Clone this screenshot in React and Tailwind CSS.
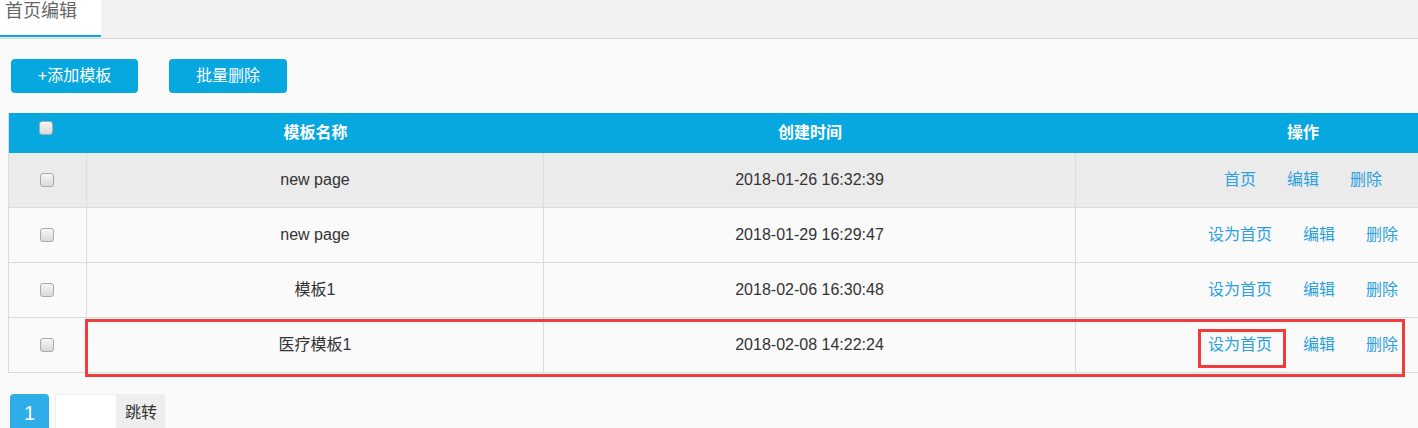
import React from "react";

const rows = [
  { name: "new page", time: "2018-01-26 16:32:39", home: true, hover: true },
  { name: "new page", time: "2018-01-29 16:29:47" },
  { name: "模板1", time: "2018-02-06 16:30:48" },
  { name: "医疗模板1", time: "2018-02-08 14:22:24" },
];

function Box() {
  return (
    <span className="block w-[14px] h-[14px] rounded-[3px] border border-[#a9a9a9] bg-gradient-to-b from-[#f6f6f6] to-[#d9d9d9]" />
  );
}

export default function App() {
  return (
    <div
      className="relative w-[1418px] h-[428px] overflow-hidden bg-[#fafafa] text-[#333]"
      style={{ fontFamily: '"Liberation Sans", "Noto Sans CJK SC", sans-serif' }}
    >
      {/* tab bar */}
      <div className="h-[39px] bg-[#f2f2f2] border-b border-[#d8d8d8] flex">
        <div className="w-[101px] h-[37px] bg-white border-b-2 border-[#07a7e0] pl-[5px] text-[18px] leading-[22px] text-[#666]">
          首页编辑
        </div>
      </div>

      {/* buttons */}
      <div className="flex gap-[31px] pl-[11px] pt-[20px]">
        <button className="h-[34px] w-[127px] rounded-[4px] bg-[#07a7e0] text-white text-[16px]">
          +添加模板
        </button>
        <button className="h-[34px] w-[118px] rounded-[4px] bg-[#07a7e0] text-white text-[16px]">
          批量删除
        </button>
      </div>

      {/* table */}
      <div className="ml-[8px] mt-[20px] w-[1521px] border-l border-[#dcdcdc]">
        <div className="grid grid-cols-[78px_457px_532px_454px] h-[40px] bg-[#07a7e0] text-white font-bold text-[16px]">
          <div className="pl-[30px] pt-[8px]">
            <Box />
          </div>
          <div className="flex items-center justify-center">模板名称</div>
          <div className="flex items-center justify-center">创建时间</div>
          <div className="flex items-center justify-center">操作</div>
        </div>
        {rows.map((r, i) => (
          <div
            key={i}
            className={`grid grid-cols-[78px_457px_532px_454px] h-[55px] border-b border-[#dcdcdc] text-[16px] ${
              r.hover ? "bg-[#ebebeb]" : "bg-[#fafafa]"
            }`}
          >
            <div className="flex items-center pl-[31px] border-r border-[#dcdcdc]">
              <Box />
            </div>
            <div className="flex items-center justify-center border-r border-[#dcdcdc]">
              {r.name}
            </div>
            <div className="flex items-center justify-center border-r border-[#dcdcdc]">
              {r.time}
            </div>
            <div className="flex items-center justify-center gap-[31px] text-[16px] text-[#2b9fdf]">
              <span>{r.home ? "首页" : "设为首页"}</span>
              <span>编辑</span>
              <span>删除</span>
            </div>
          </div>
        ))}
      </div>

      {/* pagination */}
      <div className="flex items-start pl-[10px] mt-[21px]">
        <div className="w-[39px] h-[38px] rounded-[4px] bg-[#2fade8] text-white text-[20px] flex items-center justify-center">
          1
        </div>
        <div className="ml-[6px] w-[62px] h-[38px] bg-white border border-[#eeeeee]" />
        <div className="w-[48px] h-[38px] bg-[#eeeeee] text-[16px] flex items-center justify-center">
          跳转
        </div>
      </div>

      {/* annotation overlays */}
      <div className="absolute left-[85px] top-[319px] w-[1320px] h-[58px] border-[3px] border-[#f03c3c] pointer-events-none" />
      <div className="absolute left-[1198px] top-[329px] w-[88px] h-[39px] border-[3px] border-[#f03c3c] pointer-events-none" />
    </div>
  );
}
